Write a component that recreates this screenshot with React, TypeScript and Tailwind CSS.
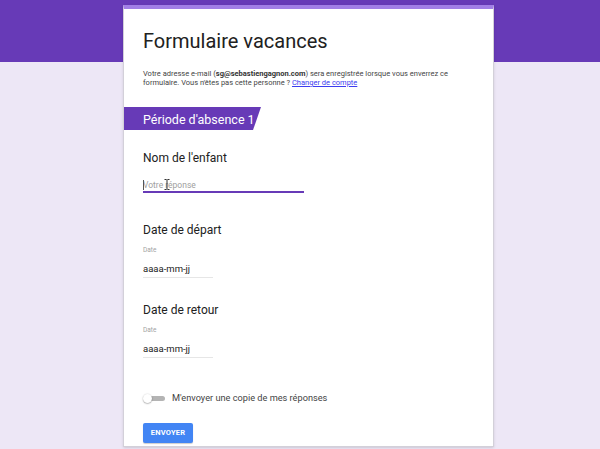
import * as React from "react"

function DateField({ label }: { label: string }) {
  return (
    <div>
      <p className="text-[12px] leading-[16px] text-[#212121]">{label}</p>
      <p className="mt-[8px] text-[6.5px] leading-[8px] text-[#a3a3a3]">Date</p>
      <div className="mt-[9px] w-[70px] pb-[2px] border-b border-[#e6e6e6]">
        <span className="block text-[9.5px] leading-[12px] text-[#212121]">aaaa-mm-jj</span>
      </div>
    </div>
  )
}

export default function App() {
  return (
    <div className="w-[600px] h-[449px] overflow-hidden bg-[linear-gradient(#673ab7_0,#673ab7_62px,#ede7f6_62px)] [font-family:Roboto,sans-serif]">
      <div className="ml-[123px] mt-[5px] w-[371px] h-[442px] bg-white border-x border-b border-[#d3d0d9] border-t-4 border-t-[#a27fe6] shadow-sm">
        <div className="px-[19px]">
          <h1 className="mt-[20px] text-[20px] leading-[24px] text-[#212121]">Formulaire vacances</h1>
          <div className="mt-[16px] text-[7.5px] leading-[9px] text-[#444]">
            <p>
              <span>Votre adresse e-mail (</span>
              <b className="font-bold text-[#333]">sg@sebastiengagnon.com</b>
              <span>) sera enregistrée lorsque vous enverrez ce</span>
            </p>
            <p>
              <span>formulaire. Vous n'êtes pas cette personne ? </span>
              <a className="text-[#3c3cf0] underline">Changer de compte</a>
            </p>
          </div>
        </div>

        <div className="mt-[20px] w-[137px] h-[23px] bg-[#673ab7] pl-[19px] [clip-path:polygon(0_0,100%_0,calc(100%_-_8px)_100%,0_100%)]">
          <span className="text-[12.5px] leading-[23px] text-white">Période d'absence 1</span>
        </div>

        <div className="px-[19px]">
          <p className="mt-[20px] text-[12px] leading-[16px] text-[#212121]">Nom de l'enfant</p>
          <div className="relative mt-[13px] w-[161px] h-[14px] border-b-2 border-[#673ab7]">
            <span className="absolute left-0 top-[1px] w-px h-[10px] bg-[#555]" />
            <span className="block text-[8.5px] leading-[12px] text-[#a0a0a0]">Votre réponse</span>
            <svg className="absolute left-[21px] top-[0px]" width="6" height="11" viewBox="0 0 6 11">
              <path d="M0.5 0.5h2M3.5 0.5h2M3 0.5v10M0.5 10.5h2M3.5 10.5h2" stroke="#333" strokeWidth="1" fill="none" />
            </svg>
          </div>

          <div className="mt-[29px]">
            <DateField label="Date de départ" />
          </div>
          <div className="mt-[24px]">
            <DateField label="Date de retour" />
          </div>

          <div className="mt-[34px] flex items-center gap-[7px]">
            <div className="relative w-[22px] h-[9px] flex items-center">
              <div className="ml-[4px] w-[18px] h-[5px] rounded-full bg-[#b4b4b4]" />
              <div className="absolute left-0 top-0 w-[9px] h-[9px] rounded-full bg-white shadow-[0_0.5px_1.5px_rgba(0,0,0,0.45)]" />
            </div>
            <span className="text-[9.2px] leading-[12px] text-[#444]">M'envoyer une copie de mes réponses</span>
          </div>

          <button className="mt-[19px] w-[50px] h-[20px] rounded-[2px] bg-[#4285f4] text-white text-[7.5px] font-bold tracking-[0.2px] shadow-[0_1px_1px_rgba(0,0,0,0.2)]">
            ENVOYER
          </button>
        </div>
      </div>
    </div>
  )
}
